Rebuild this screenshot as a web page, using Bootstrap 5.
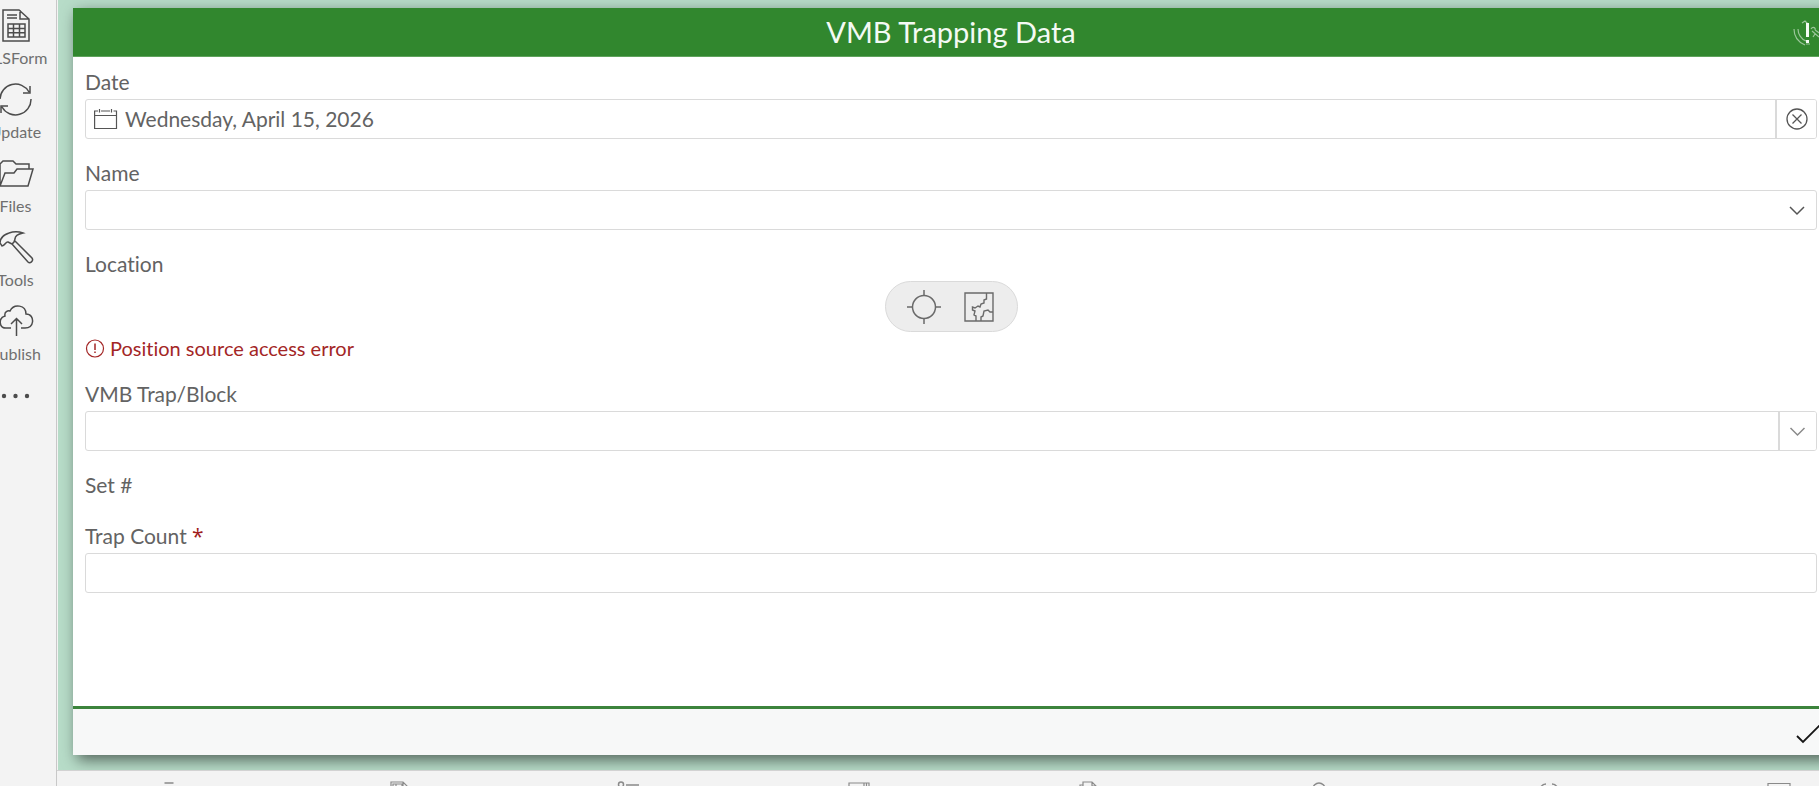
<!DOCTYPE html>
<html lang="en">
<head>
<meta charset="utf-8">
<meta name="viewport" content="width=device-width, initial-scale=1">
<title>VMB Trapping Data</title>
<link href="https://cdn.jsdelivr.net/npm/bootstrap@5.3.0/dist/css/bootstrap.min.css" rel="stylesheet">
<style>
  body { font-family: Lato, "Open Sans", sans-serif; font-size: 21px; line-height: 26px; color: #636363; background: #f3f3f3; font-variant-ligatures: none; }
  svg { display: block; fill: none; stroke: currentColor; flex: none; }
  button { color: inherit; }
  /* tool rail, partly scrolled off the left edge */
  .rail { width: 82px; margin-left: -25px; background: #f3f3f3; border-right: 1px solid #c8c8c8; padding-top: 8px; }
  .rail-item { height: 74px; padding: 0; border: 0; background: none; font-size: 16px; line-height: 20px; color: #6f6f6f; }
  .rail-item svg { color: #4c4c4c; }
  .rail-label { margin-top: 4px; }
  .stage { background: #b7dcc8; margin-left: 1px; padding: 8px 0 15px 15px; }
  .sheet { margin-right: -10px; background: #fff; box-shadow: 4px 5px 14px rgba(0,0,0,.55); }
  .sheet-head { height: 49px; background: #31872e; border-bottom: 1px solid #5fa35c; color: #f4faf4; padding: 0 4px; }
  .sheet-head h1 { font-size: 29px; line-height: 36px; font-weight: 400; }
  .head-side { width: 32px; }
  .sheet-body { padding: 12px; gap: 21px; }
  .field { gap: 4px; }
  .field-box { height: 40px; border: 1px solid #dadada; border-radius: 3px; background: #fff; overflow: hidden; }
  .field-box svg { color: #555; }
  .field-box input, .field-box select { border: 0; outline: 0; background: transparent; color: inherit; min-width: 0; height: 100%; padding: 0 7px 1px; appearance: none; }
  .side-btn { border: 0; border-left: 2px solid #dadada; background: #fff; padding: 0; }
  .clear-btn { width: 41px; }
  .list-btn { width: 38px; }
  .field-box .list-btn svg { color: #8a8a8a; }
  .pill { height: 51px; width: 133px; padding: 0 20px; background: #ededed; border: 1px solid #dadada; color: #6a6a6a; }
  .pill button, .plain-btn { border: 0; background: none; padding: 0; }
  .error { color: #a32626; font-size: 20px; line-height: 24px; gap: 5px; }
  .req { color: #a01c1c; font-family: "Open Sans", sans-serif; }
  .sheet-foot { box-sizing: content-box; height: 46px; background: #f7f8f8; border-top: 3px solid #3c843c; padding: 0 3px; color: #151515; }
  /* tab strip runs past the right and bottom edges of the window */
  .tabs-strip { height: 74px; margin: 0 -75px -58px -3px; background: #f3f3f3; border-top: 1px solid #d2d2d2; padding-top: 10px; color: #8a8a8a; }
  .tabs-strip button { border: 0; background: none; padding: 0; }
</style>
</head>
<body>
<div class="d-flex vh-100 overflow-hidden">
  <nav class="rail d-flex flex-column flex-shrink-0" aria-label="Tools">
    <button class="rail-item d-flex flex-column align-items-center">
      <svg width="36" height="36" viewBox="0 0 36 36" stroke-width="1.5"><path d="M5 2H21L31 11V33H5ZM22 2V11H31M9 7H19M9 10H19M10 16H27V29H10ZM10 20.500H27M10 24.700H27M15.500 16V29M21.500 16V29"/></svg>
      <span class="rail-label">XLSForm</span>
    </button>
    <button class="rail-item d-flex flex-column align-items-center">
      <svg width="36" height="36" viewBox="0 0 36 36" stroke-width="1.500"><path d="M2 17A15.500 15.500 0 0 1 31 10M33 17A15.500 15.500 0 0 1 4 25M32 4V11H25M3 31V24H10"/></svg>
      <span class="rail-label">Update</span>
    </button>
    <button class="rail-item d-flex flex-column align-items-center">
      <svg width="36" height="36" viewBox="0 0 36 36" stroke-width="1.500"><path d="M2 30V8L5 5H15L18 8H31V13M2 30L7 17H16L19 13H35L30 30Z"/></svg>
      <span class="rail-label">Files</span>
    </button>
    <button class="rail-item d-flex flex-column align-items-center">
      <svg width="36" height="36" viewBox="0 0 36 36" stroke-width="1.500"><path d="M2 13C2 9 5 5 11 3C15 1.500 21 1.500 25 3C20 4 17 6 17 9L16 12L14 14L10 12C8 11 7 16 4 16ZM14 14L30 32C32 34 36 31 34 28L17 11"/></svg>
      <span class="rail-label">Tools</span>
    </button>
    <button class="rail-item d-flex flex-column align-items-center">
      <svg width="36" height="36" viewBox="0 0 36 36" stroke-width="1.500"><path d="M13 24H8C1 24 0 14 7 12C6 8 10 6 12 7C16 -1 28 1 28 10C33 10 35 14 34.500 18C34 22 31 24 27 24H23M18.500 32V15M13 20L18.500 14.500L24 20"/></svg>
      <span class="rail-label">Publish</span>
    </button>
    <button class="rail-item d-flex flex-column align-items-center" aria-label="More">
      <svg width="36" height="36" viewBox="0 0 36 36"><g fill="#4c4c4c" stroke="none"><circle cx="6" cy="18" r="2.200"/><circle cx="17.500" cy="18" r="2.200"/><circle cx="29" cy="18" r="2.200"/></g></svg>
    </button>
  </nav>

  <div class="d-flex flex-column flex-grow-1 overflow-hidden">
    <main class="stage d-flex flex-column flex-grow-1 overflow-hidden">
      <form class="sheet d-flex flex-column flex-grow-1">
        <header class="sheet-head d-flex align-items-center">
          <div class="head-side"></div>
          <h1 class="flex-grow-1 text-center mb-0">VMB Trapping Data</h1>
          <button type="button" class="plain-btn head-side" aria-label="Position status">
            <svg width="32" height="32" viewBox="0 0 32 32" stroke-width="1.200"><g transform="translate(1 4)"><g opacity=".55"><path d="M0 9C0 16 4 22 11 25M4 9C4 14 7 19 12 21M8 3L11 1L14 4M17 9C19 6 22 8 21 10M18 11L25 17M21 10L28 15M21 14L19 17M12 24L16 24"/></g><path d="M13.500 3V17M13.500 20V23" stroke-width="3"/></g></svg>
          </button>
        </header>

        <div class="sheet-body d-flex flex-column flex-grow-1">
          <div class="field d-flex flex-column">
            <label for="date">Date</label>
            <div class="field-box d-flex align-items-stretch">
              <svg class="align-self-center ms-2" width="24" height="24" viewBox="0 0 24 24" stroke-width="1.200"><path d="M4 4H.600V21.500H22.500V4H19.500M7 4H16M1 8.500H22M5.500 2V5.500M17.500 2V5.500"/></svg>
              <input id="date" class="flex-grow-1" type="text" value="Wednesday, April 15, 2026">
              <button type="button" class="side-btn clear-btn d-flex align-items-center justify-content-center" aria-label="Clear date">
                <svg width="22" height="22" viewBox="0 0 22 22" stroke-width="1.300"><circle cx="11" cy="11" r="10"/><path d="M6.500 6.500L15.500 15.500M15.500 6.500L6.500 15.500"/></svg>
              </button>
            </div>
          </div>

          <div class="field d-flex flex-column">
            <label for="name">Name</label>
            <div class="field-box d-flex align-items-center">
              <select id="name" class="flex-grow-1"><option></option></select>
              <svg class="me-2" width="22" height="22" viewBox="0 0 22 22" stroke-width="1.500"><path d="M4 8L11 15L18 8"/></svg>
            </div>
          </div>

          <div class="field d-flex flex-column">
            <span>Location</span>
            <div class="pill rounded-pill align-self-center d-flex align-items-center justify-content-between">
              <button type="button" aria-label="Locate"><svg width="36" height="36" viewBox="0 0 36 36" stroke-width="1.500"><circle cx="18" cy="18" r="11.500"/><path d="M18 1V6.500M18 29.500V35M1 18H6.500M29.500 18H35"/></svg></button>
              <button type="button" aria-label="Map"><svg width="36" height="36" viewBox="0 0 36 36" stroke-width="1.400"><path d="M4 4H32V32H4ZM25.500 4V10L23 11V14L20 15L19 18L17 17L14 19L11.500 18V21L14 22L13 26L15 27V32M20 32V28L22 27L23 22L27 21L29 23H32"/></svg></button>
            </div>
            <div class="error d-flex align-items-center" role="alert">
              <svg width="20" height="20" viewBox="0 0 20 20" stroke-width="1.200"><circle cx="10" cy="10.500" r="8.500"/><path d="M10 5.500V12M10 13.500V15" stroke-width="1.500"/></svg>
              <span>Position source access error</span>
            </div>
          </div>

          <div class="field d-flex flex-column">
            <label for="block">VMB Trap/Block</label>
            <div class="field-box d-flex align-items-stretch">
              <input id="block" class="flex-grow-1" type="text">
              <button type="button" class="side-btn list-btn d-flex align-items-center justify-content-center" aria-label="Open list">
                <svg width="22" height="22" viewBox="0 0 22 22" stroke-width="1.500"><path d="M3.500 8L10.500 15L17.500 8"/></svg>
              </button>
            </div>
          </div>

          <div class="pb-1">Set #</div>

          <div class="field d-flex flex-column">
            <label for="count">Trap Count <span class="req">*</span></label>
            <div class="field-box d-flex"><input id="count" class="flex-grow-1" type="text"></div>
          </div>
        </div>

        <footer class="sheet-foot d-flex align-items-center justify-content-end">
          <button class="plain-btn" aria-label="Submit"><svg width="30" height="30" viewBox="0 0 30 30" stroke-width="1.800"><path d="M1 19L7 25L28 4"/></svg></button>
        </footer>
      </form>
    </main>

    <nav class="tabs-strip row flex-nowrap g-0 align-items-start flex-shrink-0" aria-label="Views">
      <button class="col d-flex justify-content-center"><svg width="24" height="24" viewBox="0 0 24 24" stroke="#222" stroke-width="1.500"><path d="M7.500 2H16.500M12 8V22"/></svg></button>
      <button class="col d-flex justify-content-center"><svg width="24" height="24" viewBox="0 0 24 24" stroke-width="1.200"><path d="M4 22V1H16L21 6V22M6 22V3H15V6M9 6H13M9 3V22M16 1V6H21"/></svg></button>
      <button class="col d-flex justify-content-center"><svg width="24" height="24" viewBox="0 0 24 24" stroke-width="1.500"><circle cx="4" cy="3.500" r="2.500"/><path d="M9 4H22"/></svg></button>
      <button class="col d-flex justify-content-center"><svg width="24" height="24" viewBox="0 0 24 24" stroke-width="1.200"><path d="M2 22V2H22V22M17 2V8M19.500 2V8"/></svg></button>
      <button class="col d-flex justify-content-center"><svg width="24" height="24" viewBox="0 0 24 24" stroke-width="1.200"><path d="M6 18V1H15L19 5V18M3 22V4H6M15 1V5H19"/></svg></button>
      <button class="col d-flex justify-content-center"><svg width="24" height="24" viewBox="0 0 24 24" stroke-width="1.500"><circle cx="12" cy="8" r="6"/></svg></button>
      <button class="col d-flex justify-content-center"><svg width="24" height="24" viewBox="0 0 24 24" stroke-width="1.500"><path d="M9 3C6 3 4 5 3 8M15 3C18 3 20 5 21 8"/></svg></button>
      <button class="col d-flex justify-content-center"><svg width="24" height="24" viewBox="0 0 24 24" stroke-width="1.200"><path d="M1 22V2.500H23V22Z"/></svg></button>
    </nav>
  </div>
</div>
<script src="https://cdn.jsdelivr.net/npm/bootstrap@5.3.0/dist/js/bootstrap.bundle.min.js"></script>
</body>
</html>
